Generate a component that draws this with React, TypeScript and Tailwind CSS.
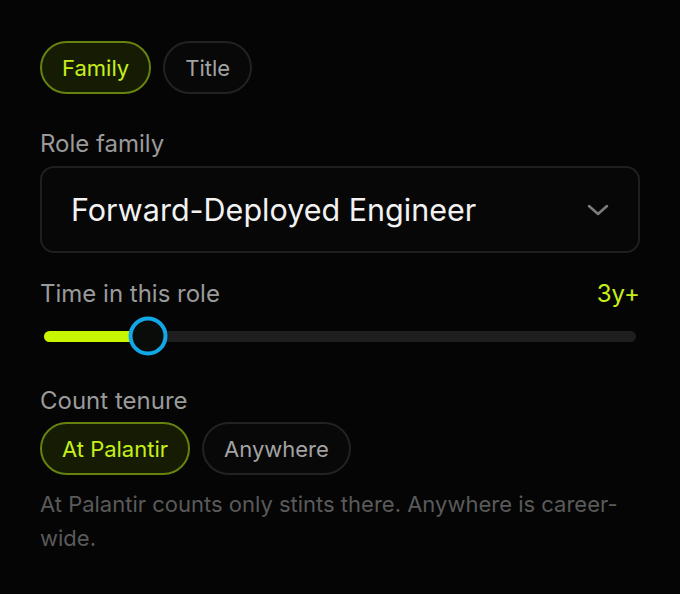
import { useState } from 'react'

const font = { fontFamily: 'Inter, "Noto Sans", sans-serif' }

function Pill({ active, label, onClick }: { active: boolean; label: string; onClick: () => void }) {
  return (
    <button
      onClick={onClick}
      className={
        active
          ? 'h-[53px] px-[20px] rounded-full border-2 border-[#66820f] bg-[#151c03] text-[#c6ef1a] text-[22px] leading-none'
          : 'h-[53px] px-[20px] rounded-full border-2 border-[#222] bg-[#080808] text-[#a3a3a3] text-[22px] leading-none'
      }
    >
      {label}
    </button>
  )
}

export default function App() {
  const [mode, setMode] = useState('family')
  const [scope, setScope] = useState('palantir')
  const pct = 17.6

  return (
    <div className="min-h-screen w-full bg-[#050505] px-[40px] pt-[41px]" style={font}>
      <div className="flex gap-[12px]">
        <Pill active={mode === 'family'} label="Family" onClick={() => setMode('family')} />
        <Pill active={mode === 'title'} label="Title" onClick={() => setMode('title')} />
      </div>

      <div className="mt-[36px] text-[24px] leading-[28px] text-[#9a9a9a]">Role family</div>
      <div className="mt-[8px] h-[87px] rounded-[14px] border-2 border-[#1f1f1f] bg-[#070707] flex items-center justify-between pl-[29px] pr-[29px]">
        <span className="text-[30.5px] text-[#f2f2f2]">Forward-Deployed Engineer</span>
        <svg width="22" height="12" viewBox="0 0 22 12" fill="none" stroke="#7c7c7c" strokeWidth="2.5" strokeLinecap="round" strokeLinejoin="round">
          <path d="M2 2l9 8 9-8" />
        </svg>
      </div>

      <div className="mt-[27px] flex items-center justify-between text-[24px] leading-[28px]">
        <span className="text-[#9a9a9a]">Time in this role</span>
        <span className="text-[#c6ef1a]">3y+</span>
      </div>
      <div className="mt-[8px] h-[40px] flex items-center px-[4px]">
        <div className="relative h-[11px] w-full rounded-full bg-[#1e1e1e]">
          <div className="absolute left-0 top-0 h-full rounded-full bg-[#c8f500]" style={{ width: pct + '%' }} />
          <div
            className="absolute top-1/2 h-[39px] w-[39px] -translate-x-1/2 -translate-y-1/2 rounded-full border-4 border-[#12a8e8] bg-[#0a0c0a]"
            style={{ left: pct + '%' }}
          />
        </div>
      </div>

      <div className="mt-[31px] text-[24px] leading-[28px] text-[#9a9a9a]">Count tenure</div>
      <div className="mt-[7px] flex gap-[12px]">
        <Pill active={scope === 'palantir'} label="At Palantir" onClick={() => setScope('palantir')} />
        <Pill active={scope === 'anywhere'} label="Anywhere" onClick={() => setScope('anywhere')} />
      </div>
      <p className="mt-[12px] text-[22px] leading-[34px] text-[#5a5a5a]">
        At Palantir counts only stints there. Anywhere is career-wide.
      </p>
    </div>
  )
}
